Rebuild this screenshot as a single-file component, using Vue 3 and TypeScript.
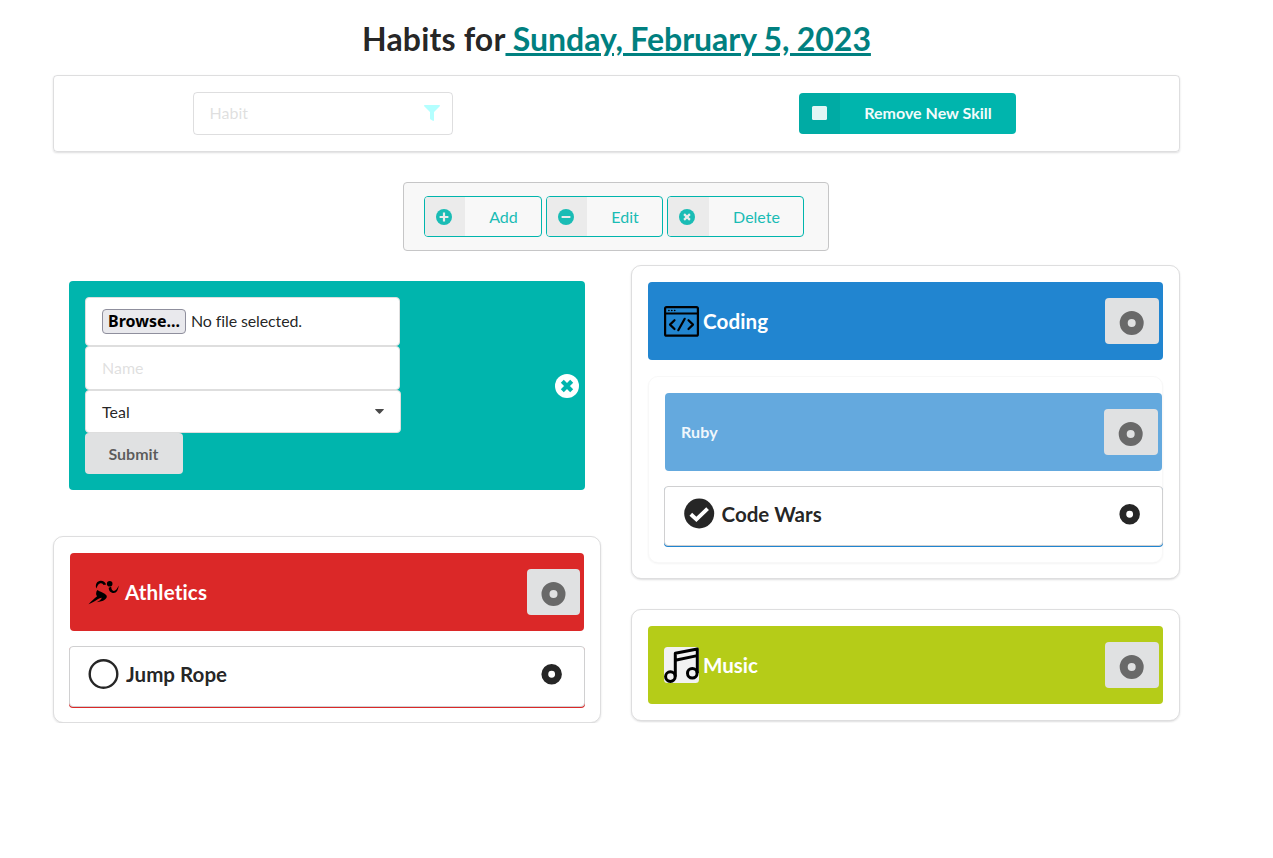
<script setup lang="ts">
import { ref } from 'vue'

interface Action {
  label: string
  kind: 'plus' | 'minus' | 'times'
}

const actions: Action[] = [
  { label: 'Add', kind: 'plus' },
  { label: 'Edit', kind: 'minus' },
  { label: 'Delete', kind: 'times' },
]
const day = ref('Sunday, February 5, 2023')
const habit = ref('')
const skillName = ref('')
</script>

<template>
  <main class="page">
    <h1 class="title">Habits for<a class="day">&nbsp;{{ day }}</a></h1>

    <section class="filters">
      <div class="cell">
        <div class="search">
          <input v-model="habit" class="search-input" type="text" placeholder="Habit" />
          <svg class="funnel" viewBox="0 0 512 512"><path d="M488 0H24C3 0-8 26 7 41l185 185v206c0 8 4 15 10 20l80 55c16 11 38 0 38-19V226L505 41c15-15 4-41-17-41z" /></svg>
        </div>
      </div>
      <div class="cell">
        <button class="skill-toggle" type="button">
          <span class="toggle-icon"><i class="square"></i></span>
          <span class="toggle-label">Remove New Skill</span>
        </button>
      </div>
    </section>

    <nav class="toolbar">
      <button v-for="a in actions" :key="a.label" type="button" class="action" :class="a.kind">
        <span class="action-icon">
          <svg viewBox="0 0 16 16">
            <circle cx="8" cy="8" r="8" />
            <path v-if="a.kind === 'plus'" d="M8 3.600v8.800M3.600 8h8.800" />
            <path v-else-if="a.kind === 'minus'" d="M3.600 8h8.800" />
            <path v-else d="M5.100 5.100l5.800 5.800M10.900 5.100l-5.800 5.800" />
          </svg>
        </span>
        <span class="action-label">{{ a.label }}</span>
      </button>
    </nav>

    <div class="columns">
      <div class="column left">
        <form class="new-skill" @submit.prevent>
          <div class="fields">
            <div class="field file">
              <span class="browse">Browse...</span>
              <span class="file-status">No file selected.</span>
            </div>
            <input v-model="skillName" class="field name" type="text" placeholder="Name" />
            <div class="field select"><span>Teal</span><svg class="caret" viewBox="0 0 9 5"><path d="M.6 0h7.800c.5 0 .7.500.3.800L5.100 4.600a.9.900 0 0 1-1.200 0L.3.800C-.1.500.1 0 .6 0z" /></svg></div>
            <button class="submit" type="submit">Submit</button>
          </div>
          <svg class="close" viewBox="0 0 24 24">
            <circle cx="12" cy="12" r="12" />
            <path d="M7.300 7.300l9.400 9.400M16.700 7.300l-9.400 9.400" />
          </svg>
        </form>

        <section class="panel">
          <header class="bar red">
            <svg class="runner" viewBox="0 -2 36 32">
              <path d="M8.200 10.600C7 5.500 9.300 3 12.500 2.700c2.600-.2 4.700 1.200 5.700 3.700l-2.700.7c-.5-1.500-2.100-2.300-3.700-1.500-1.900.9-2.400 2.700-3.600 5z" />
              <circle cx="21.700" cy="5.800" r="2.800" />
              <path d="M20.700 9.800l2.500-1c.2 2.600.9 4.100 2.600 4.200 1.900 0 3.300-2.200 4.900-5.400-.3 4.400-2.300 7.500-4.900 7.500-3.300 0-5.100-2.500-5.100-5.300z" />
              <path d="M9.300 11.900c1.900 1.300 8.400 3.600 9.300 5.700 1.200 3-3 6.300-10 6.600 2.600-1.300 4.800-2.700 5.200-4.500-3.600.5-6.800 3.800-13.300 6.500 2.800-3.200 5.800-5.500 8.600-7.900-1.500-1.300-1.200-4.600.2-6.400z" />
            </svg>
            <h2 class="name-text shift">Athletics</h2>
            <button class="more" type="button"><svg viewBox="0 0 24 24"><path d="M11.500 0a12 12 0 1 0 0 24a12 12 0 0 0 0-24zm0 8a4 4 0 1 1 0 8a4 4 0 0 1 0-8z" /></svg></button>
          </header>
          <article class="habit under-red">
            <svg class="mark" viewBox="0 0 30 30"><circle cx="14.500" cy="15" r="13.800" class="ring" /></svg>
            <h3 class="habit-name">Jump Rope</h3>
            <svg class="disc" viewBox="0 0 24 24"><path d="M11.300 0a12 12 0 1 0 0 24a12 12 0 0 0 0-24zm0 8a4 4 0 1 1 0 8a4 4 0 0 1 0-8z" /></svg>
          </article>
        </section>
      </div>

      <div class="column right">
        <section class="panel">
          <header class="bar blue">
            <svg class="logo" viewBox="0 0 35 36">
              <g fill="none" stroke="#000" stroke-width="2.200" stroke-linecap="round" stroke-linejoin="round">
                <rect x="1.100" y="4.100" width="32.800" height="28.600" rx="1.500" />
                <path d="M1 10.500h33" stroke-width="1.800" stroke-linecap="butt" />
                <path d="M10.500 17.200L6 21.600l4.500 4.400M24.500 17.200l4.500 4.400-4.500 4.400M20.700 15.800l-6.400 11.400" />
                <path d="M4.800 7.500h.2M7.700 7.500h.2M10.600 7.500h.2" stroke-width="1.500" />
              </g>
            </svg>
            <h2 class="name-text">Coding</h2>
            <button class="more" type="button"><svg viewBox="0 0 24 24"><path d="M11.700 0a12 12 0 1 0 0 24a12 12 0 0 0 0-24zm0 8a4 4 0 1 1 0 8a4 4 0 0 1 0-8z" /></svg></button>
          </header>
          <section class="subpanel">
            <header class="bar sky">
              <h4 class="sub-name">Ruby</h4>
              <button class="more" type="button"><svg viewBox="0 0 24 24"><path d="M11.700 0a12 12 0 1 0 0 24a12 12 0 0 0 0-24zm0 8a4 4 0 1 1 0 8a4 4 0 0 1 0-8z" /></svg></button>
            </header>
            <article class="habit under-blue">
              <svg class="mark" viewBox="0 0 30 30">
                <circle cx="15.200" cy="14.500" r="15" class="solid" />
                <path d="M6.800 15.200l5.600 5.200L23.600 9.700" class="tick" />
              </svg>
              <h3 class="habit-name">Code Wars</h3>
              <svg class="disc" viewBox="0 0 24 24"><path d="M11.300 0a12 12 0 1 0 0 24a12 12 0 0 0 0-24zm0 8a4 4 0 1 1 0 8a4 4 0 0 1 0-8z" /></svg>
            </article>
          </section>
        </section>

        <section class="panel">
          <header class="bar olive">
            <svg class="logo" viewBox="0 0 35 36">
              <rect width="35" height="36" rx="3.500" fill="#f2f2f2" />
              <g fill="none" stroke="#000" stroke-width="3" stroke-linejoin="round">
                <circle cx="6.400" cy="29.600" r="4.800" />
                <circle cx="28.300" cy="26.300" r="4.800" />
                <path d="M11.300 29.600V6.300L33.300 2v24M11.300 13.300l22-4.700" />
              </g>
            </svg>
            <h2 class="name-text flat">Music</h2>
            <button class="more" type="button"><svg viewBox="0 0 24 24"><path d="M11.700 0a12 12 0 1 0 0 24a12 12 0 0 0 0-24zm0 8a4 4 0 1 1 0 8a4 4 0 0 1 0-8z" /></svg></button>
          </header>
        </section>
      </div>
    </div>
  </main>
</template>

<style>
body {
  background: #fff;
}
</style>

<style scoped>
.page,
.page * {
  box-sizing: border-box;
}
.page {
  width: 1127px;
  margin-left: 53px;
  padding-top: 18px;
  color: rgba(0, 0, 0, 0.87);
  font: 16px/20px Lato, sans-serif;
}
.page button,
.page input {
  font-family: inherit;
  font-size: 16px;
}
h1, h2, h3, h4 {
  margin: 0;
  font-weight: 700;
  white-space: nowrap;
}
.title {
  height: 57px;
  font-size: 32px;
  line-height: 42px;
  letter-spacing: 0.15px;
  text-align: center;
}
.day {
  color: #008080;
  letter-spacing: -0.04px;
  word-spacing: -0.4px;
  text-decoration: underline;
}
.filters {
  display: grid;
  grid-template-columns: 538px 1fr;
  height: 77px;
  border: 1px solid rgba(34, 36, 38, 0.15);
  border-radius: 4px;
  box-shadow: 0 1px 2px rgba(34, 36, 38, 0.15);
}
.cell {
  display: flex;
  align-items: center;
  justify-content: center;
}
.cell:last-child {
  justify-content: flex-start;
  padding-left: 207px;
}
.search {
  display: flex;
  align-items: center;
  width: 260px;
  height: 43px;
  padding: 0 12px 2px 15.500px;
  border: 1px solid rgba(34, 36, 38, 0.15);
  border-radius: 4px;
}
.search-input {
  flex: 1;
  min-width: 0;
  padding: 0;
  border: 0;
  outline: 0;
  background: transparent;
}
input::placeholder {
  color: rgba(191, 191, 191, 0.5);
  opacity: 1;
}
.funnel {
  width: 16px;
  height: 16px;
  fill: #b3ffff;
}
.skill-toggle {
  display: flex;
  width: 217px;
  height: 41px;
  padding: 0;
  overflow: hidden;
  border: 0;
  border-radius: 4px;
  background: #00b5ad;
  color: #f2fbfb;
  font-weight: 700;
}
.toggle-icon {
  display: flex;
  align-items: center;
  justify-content: center;
  width: 41px;
  height: 41px;
  padding-bottom: 1px;
  background: rgba(0, 0, 0, 0.05);
}
.square {
  width: 15px;
  height: 14px;
  margin-right: 1px;
  border-radius: 1.5px;
  background: #e2f6f5;
}
.toggle-label {
  flex: 1;
  line-height: 39px;
  text-align: center;
}
.toolbar {
  display: flex;
  gap: 4px;
  width: 426px;
  height: 69px;
  margin: 30px 0 0 350px;
  padding: 13px 20px;
  border: 1px solid #c6c6c7;
  border-radius: 4px;
  background: #f8f8f8;
}
.action {
  display: flex;
  width: 118px;
  height: 41px;
  padding: 0;
  overflow: hidden;
  border: 1px solid #00b5ad;
  border-radius: 4px;
  background: transparent;
  color: #1abcb5;
}
.action.minus {
  width: 117px;
}
.action.times {
  width: 137px;
}
.action-icon {
  display: flex;
  align-items: center;
  justify-content: center;
  width: 40px;
  padding-right: 2px;
  background: #ebebeb;
}
.action.times .action-icon {
  width: 41px;
  padding-right: 3px;
}
.action-icon svg {
  width: 16px;
  height: 16px;
  fill: #1abcb5;
  stroke: #ebebeb;
  stroke-width: 2.200;
}
.action-icon circle {
  stroke: none;
}
.action-label {
  flex: 1;
  padding-left: 1px;
  line-height: 40px;
  text-align: center;
}
.columns {
  display: grid;
  grid-template-columns: 548px 549px;
  column-gap: 30px;
  align-items: start;
  margin-top: 14px;
}
.column {
  display: flex;
  flex-direction: column;
}
.left {
  gap: 46px;
  padding-top: 16px;
}
.right {
  gap: 30px;
}
.new-skill {
  display: flex;
  align-items: center;
  justify-content: space-between;
  height: 209px;
  margin: 0 16px;
  padding: 16px 6px 16px 16px;
  border-radius: 4px;
  background: #00b5ad;
}
.fields {
  display: flex;
  flex-direction: column;
  align-items: flex-start;
}
.field {
  display: flex;
  align-items: center;
  width: 315px;
  padding: 0 16px;
  border: 1px solid #dedede;
  border-radius: 4px;
  background: #fff;
}
.file {
  gap: 5px;
  height: 49px;
}
.file-status {
  padding-bottom: 2px;
  letter-spacing: -0.12px;
}
.browse {
  width: 84px;
  height: 25px;
  border: 1px solid #8f8f9d;
  border-radius: 4px;
  background: #e9e9ed;
  color: #000;
  font: 700 16px/23px "Noto Sans", sans-serif;
  text-align: center;
}
.name {
  height: 44px;
  padding-bottom: 2px;
  outline: 0;
}
.select {
  justify-content: space-between;
  width: 316px;
  height: 43px;
}
.caret {
  width: 9px;
  height: 5px;
  fill: #4a4a4a;
}
.submit {
  width: 98px;
  height: 41px;
  padding: 0 1px 0 0;
  border: 0;
  border-radius: 4px;
  background: #e0e1e2;
  color: rgba(0, 0, 0, 0.6);
  font-weight: 700;
}
.close {
  width: 24px;
  height: 24px;
  fill: #fff;
  stroke: #00b5ad;
  stroke-width: 4.200;
}
.close circle {
  stroke: none;
}
.panel {
  padding: 16px;
  border: 1px solid rgba(34, 36, 38, 0.15);
  border-radius: 10px;
  box-shadow: 0 1px 2px rgba(34, 36, 38, 0.15);
}
.left .panel {
  height: 187px;
}
.bar {
  display: flex;
  align-items: center;
  height: 78px;
  padding: 0 4px 0 16px;
  border-radius: 4px;
  color: #fff;
}
.red {
  background: #db2828;
}
.blue {
  background: #2185d0;
}
.sky {
  background: #64a9de;
}
.olive {
  background: #b5cc18;
}
.logo {
  width: 35px;
  height: 36px;
}
.runner {
  width: 36px;
  height: 32px;
  margin-left: 2px;
}
.name-text {
  margin-left: 4px;
  font-size: 20.570px;
  line-height: 26px;
  letter-spacing: 0.1px;
}
.name-text.shift {
  margin-left: 1px;
  letter-spacing: 0.16px;
}
.name-text.flat {
  letter-spacing: 0;
}
.sub-name {
  font-size: 16px;
  letter-spacing: 0.15px;
  color: #f0f7fc;
}
.more {
  display: flex;
  align-items: center;
  justify-content: center;
  width: 54px;
  height: 46px;
  margin-left: auto;
  padding: 3px 1px 0 0;
  border: 0;
  border-radius: 4px;
  background: #e0e1e2;
}
.red .more {
  width: 53px;
  padding-right: 0;
}
.more svg {
  width: 24px;
  height: 24px;
  overflow: visible;
  fill: #696969;
}
.habit {
  display: flex;
  align-items: center;
  height: 61px;
  margin: 15px -1px 0;
  padding: 0 22px 5px 19px;
  border: 1px solid #d0d0d1;
  border-radius: 4px;
  background: #fff;
}
.under-red {
  padding-left: 18.500px;
  box-shadow: 0 1px 0 #db2828;
}
.under-blue {
  height: 60px;
  padding-bottom: 4px;
  box-shadow: 0 1px 0 #2185d0;
}
.mark {
  width: 30px;
  height: 30px;
  overflow: visible;
}
.ring {
  fill: none;
  stroke: #262626;
  stroke-width: 2.400;
}
.solid {
  fill: #262626;
}
.tick {
  fill: none;
  stroke: #fff;
  stroke-width: 3.900;
}
.habit-name {
  margin-left: 7.500px;
  font-size: 20.570px;
  line-height: 26px;
}
.disc {
  width: 20.500px;
  height: 20.500px;
  margin-left: auto;
  overflow: visible;
  fill: #262626;
}
.subpanel {
  height: 187px;
  margin: 16px 0 -1px;
  padding: 16px 0 0 16px;
  border: 1px solid rgba(34, 36, 38, 0.03);
  border-radius: 10px;
  box-shadow: 0 1px 2px rgba(34, 36, 38, 0.05);
}
</style>
